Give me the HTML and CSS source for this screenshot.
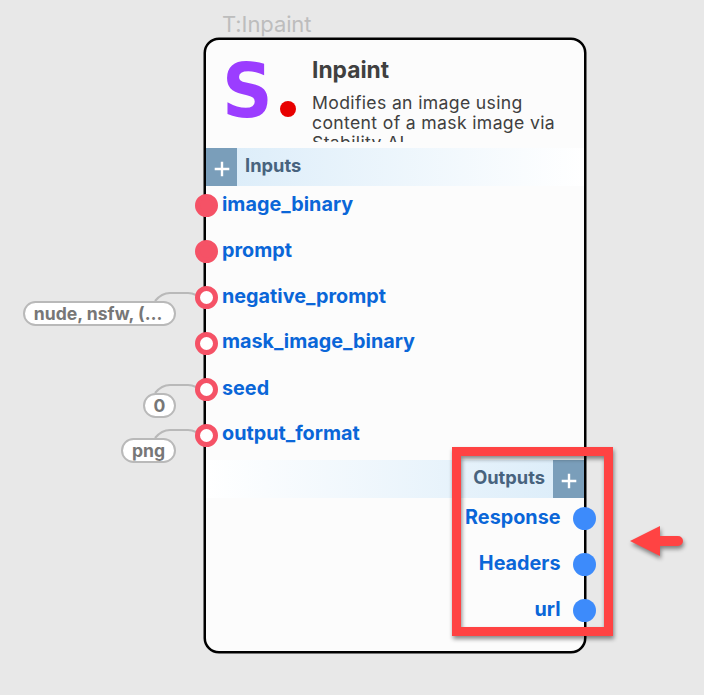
FILE: index.html
```html
<!DOCTYPE html>
<html lang="en">
<head>
<meta charset="utf-8">
<title>Inpaint</title>
<link rel="stylesheet" href="styles.css">
</head>
<body>
<main class="canvas">
  <div class="node-title">T:Inpaint</div>
  <section class="node">
    <header class="node-header">
      <div class="logo"><span class="logo-letter">S</span><span class="logo-dot"></span></div>
      <div class="summary">
        <h1>Inpaint</h1>
        <p>Modifies an image using content of a mask image via Stability AI.</p>
      </div>
    </header>
    <div class="bar bar-in">
      <span class="add"><svg width="16" height="16" viewBox="0 0 16 16"><path d="M8 .7v14.6M.7 8h14.6"/></svg></span>
      <span class="bar-label">Inputs</span>
    </div>
    <ul class="ports inputs">
      <li><i class="dot full"></i><span>image_binary</span></li>
      <li><i class="dot full"></i><span>prompt</span></li>
      <li><i class="dot"></i><span>negative_prompt</span>
        <svg class="wire" width="50" height="14" viewBox="0 0 50 14"><path d="M1 11C6 5 10 3 16 3H34Q38 3 42 5"/></svg>
        <b class="value wide">nude, nsfw, (…</b></li>
      <li><i class="dot"></i><span class="raised">mask_image_binary</span></li>
      <li><i class="dot"></i><span>seed</span>
        <svg class="wire" width="50" height="14" viewBox="0 0 50 14"><path d="M1 11C6 5 10 3 16 3H34Q38 3 42 5"/></svg>
        <b class="value zero">0</b></li>
      <li><i class="dot"></i><span class="raised">output_format</span>
        <svg class="wire" width="50" height="14" viewBox="0 0 50 14"><path d="M1 11C6 5 10 3 16 3H34Q38 3 42 5"/></svg>
        <b class="value png">png</b></li>
    </ul>
    <div class="bar bar-out">
      <span class="bar-label">Outputs</span>
      <span class="add"><svg width="16" height="16" viewBox="0 0 16 16"><path d="M8 .7v14.6M.7 8h14.6"/></svg></span>
    </div>
    <ul class="ports outputs">
      <li><span>Response</span><i class="dot"></i></li>
      <li><span>Headers</span><i class="dot"></i></li>
      <li><span>url</span><i class="dot"></i></li>
    </ul>
  </section>
  <div class="highlight"></div>
  <svg class="arrow" width="60" height="40" viewBox="0 0 60 40"><path d="M0 16L30 1V11H48A5 5 0 0 1 48 21H30V31Z"/></svg>
</main>
</body>
</html>
```
FILE: styles.css
```css
* { box-sizing: border-box; }
body { margin: 0; background: #e8e8e8; font-family: Inter, sans-serif; }
.canvas { position: relative; width: 704px; height: 695px; overflow: hidden; padding-top: 10px; }
.node-title { height: 28px; margin-left: 222px; font-size: 22px; line-height: 28px; letter-spacing: -.1px; color: #bdbdbd; }
.node {
  width: 382px; height: 615px; margin-left: 204px;
  border: 2px solid #000; border-radius: 15px;
  box-shadow: 0 0 0 .5px #000; background: #fcfcfc;
}
.node-header { display: flex; height: 108px; }
.logo { display: flex; width: 106px; padding-left: 16px; }
.logo-letter { width: 58px; font: bold 74px/103px "DejaVu Sans", sans-serif; color: #9b3dff; transform: scaleX(.95); transform-origin: 0 0; }
.logo-dot { width: 16px; height: 16px; margin: 61px 0 0 0; border-radius: 50%; background: #e80000; }
.summary { width: 262px; height: 102px; overflow: hidden; color: #404040; }
h1 { margin: 16px 0 0; font-size: 22.8px; line-height: 28px; font-weight: 700; }
p { margin: 9px 0 0; font-size: 17.6px; line-height: 20px; letter-spacing: .35px; }
.bar { display: flex; height: 38px; }
.bar-in { background: linear-gradient(90deg, #daecf9, #fff); }
.bar-out { justify-content: flex-end; background: linear-gradient(270deg, #daecf9, #fff); }
.add { display: flex; justify-content: center; align-items: center; width: 31px; padding-top: 3px; background: #7a9eba; }
.add path { stroke: #fff; stroke-width: 2.4; fill: none; }
.bar-label { margin: 0 8px; font-size: 18.3px; line-height: 35px; font-weight: 700; color: #48637e; }
.ports { list-style: none; margin: 0; padding: 0; font-size: 19.8px; font-weight: 700; color: #0a66d8; }
.ports li { position: relative; display: flex; align-items: center; height: 46px; }
.ports span { padding-bottom: 3px; line-height: 26px; }
.ports .raised { padding-bottom: 5px; }
.inputs { height: 277px; margin-top: -3px; }
.inputs li { height: 45.9px; }
.dot { flex: none; position: relative; z-index: 1; width: 23px; height: 23px; border-radius: 50%; }
.inputs .dot { margin: 0 4px 0 -11px; border: 5px solid #f55266; background: #fff; }
.inputs .full { background: #f55266; }
.outputs { margin-top: -3px; }
.outputs li { justify-content: flex-end; }
.outputs .dot { margin: 0 -12px 0 12.5px; background: #3d8bfb; }
.wire { position: absolute; left: -52px; top: 15px; }
.wire path { fill: none; stroke: #b9b9b9; stroke-width: 2; }
.value {
  position: absolute; right: 408px; top: 26px; height: 25px;
  border: 2px solid #b9b9b9; border-radius: 13px; background: #fff; color: #777;
  font-size: 17.6px; line-height: 22px; font-weight: 700; text-align: center; white-space: nowrap;
}
.wide { width: 153px; padding-right: 3px; }
.zero { width: 33px; }
.png { width: 55px; }
.highlight {
  position: absolute; left: 452px; top: 447px; width: 161px; height: 189px;
  border: 9px solid #ff4343; filter: drop-shadow(1px 3px 2px rgba(0,0,0,.45));
}
.arrow { position: absolute; left: 630px; top: 525px; overflow: visible; filter: drop-shadow(1px 3px 2px rgba(0,0,0,.45)); }
.arrow path { fill: #ff4343; }
```
